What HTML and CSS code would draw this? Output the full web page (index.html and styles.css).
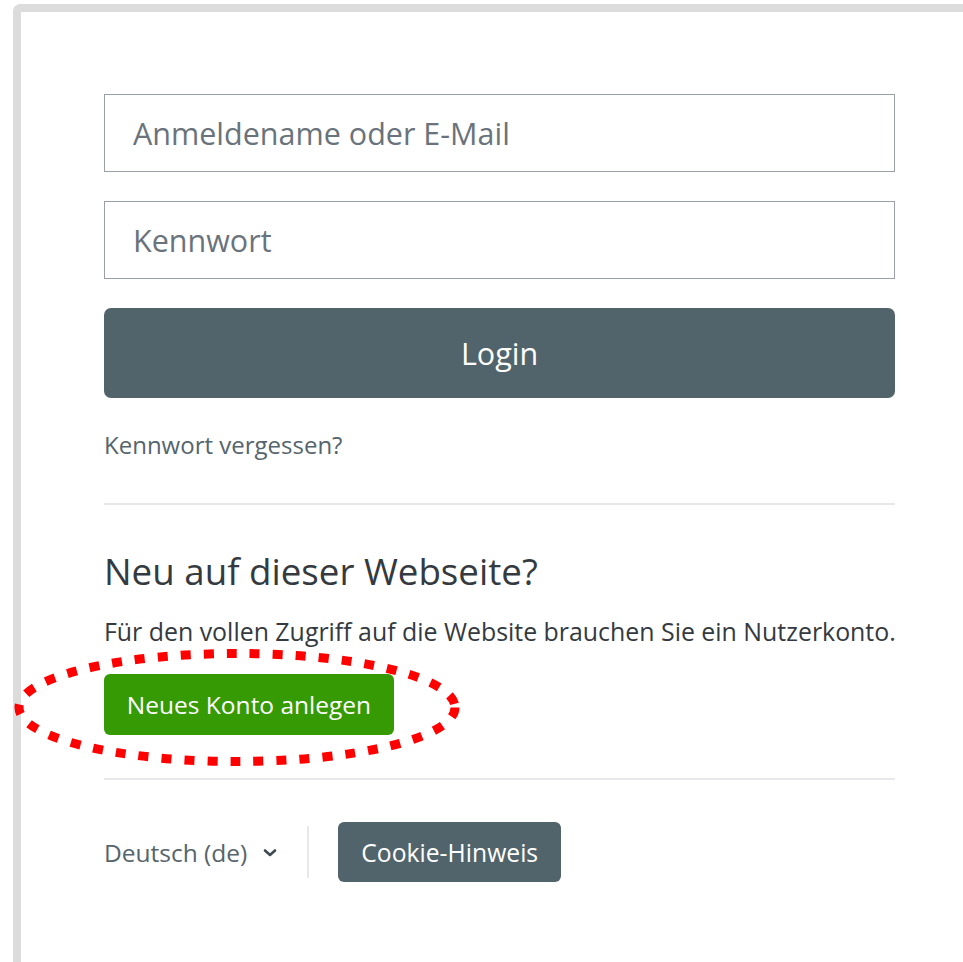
FILE: index.html
```html
<!DOCTYPE html>
<html lang="de">
<head>
<meta charset="utf-8">
<title>Login</title>
<link rel="stylesheet" href="styles.css">
</head>
<body>
<div class="frame">
  <div class="login">
    <form class="login-form">
      <input class="field" type="text" placeholder="Anmeldename oder E-Mail">
      <input class="field" type="password" placeholder="Kennwort">
      <button class="btn btn-login" type="button">Login</button>
    </form>
    <a class="forgot" href="#">Kennwort vergessen?</a>
    <hr class="rule rule-top">
    <h2 class="signup-title">Neu auf dieser Webseite?</h2>
    <p class="signup-text">Für den vollen Zugriff auf die Website brauchen Sie ein Nutzerkonto.</p>
    <div class="signup-action">
      <button class="btn btn-signup" type="button">Neues Konto anlegen</button>
      <svg class="highlight" width="446" height="119" viewBox="0 0 446 119">
        <ellipse cx="223" cy="59.5" rx="218" ry="54" fill="none" stroke="#ff0000" stroke-width="9" stroke-dasharray="10 13"/>
      </svg>
    </div>
    <hr class="rule rule-bottom">
    <div class="footer-row">
      <div class="lang">
        <span>Deutsch (de)</span>
        <svg class="chev" width="14" height="10" viewBox="0 0 14 10"><path d="M2 2.5 L7 7 L12 2.5" fill="none" stroke="#3d4a52" stroke-width="2.6" stroke-linecap="round" stroke-linejoin="round"/></svg>
      </div>
      <div class="divider"></div>
      <button class="btn btn-cookie" type="button">Cookie-Hinweis</button>
    </div>
  </div>
</div>
</body>
</html>
```

FILE: styles.css
```css
html, body {
  margin: 0;
  padding: 0;
  background: #ffffff;
}

body {
  font-family: "Open Sans", "Noto Sans", sans-serif;
  color: #343a40;
  height: 962px;
  overflow: hidden;
}

.frame {
  margin: 4px 0 0 13px;
  border-top: 8px solid #dcdcdc;
  border-left: 8px solid #dcdcdc;
  border-top-left-radius: 8px;
  height: 960px;
  box-sizing: border-box;
}

.login {
  width: 791px;
  padding: 82px 0 0 83px;
}

.login-form {
  display: flex;
  flex-direction: column;
  gap: 29px;
}

.field {
  height: 78px;
  box-sizing: border-box;
  border: 1px solid #9aa0a8;
  border-radius: 0;
  padding: 0 28px;
  font-family: inherit;
  font-size: 30.5px;
  color: #343a40;
  outline: none;
}

.field::placeholder {
  color: #6a737b;
}

.btn {
  border: none;
  font-family: inherit;
  color: #ffffff;
  cursor: pointer;
}

.btn-login {
  height: 90px;
  border-radius: 7px;
  background: #52646b;
  font-size: 30.5px;
}

.forgot {
  display: block;
  margin-top: 31px;
  font-size: 24px;
  line-height: 32px;
  color: #56646c;
  text-decoration: none;
}

.rule {
  border: none;
  border-top: 2px solid #e6e8ec;
  margin: 0;
}

.rule-top {
  margin-top: 42px;
}

.signup-title {
  margin: 44px 0 0;
  font-size: 36.7px;
  line-height: 44px;
  font-weight: 400;
  color: #343a40;
}

.signup-text {
  margin: 21px 0 0;
  font-size: 24.9px;
  line-height: 34px;
  white-space: nowrap;
}

.signup-action {
  position: relative;
  margin-top: 26px;
  display: flex;
}

.btn-signup {
  width: 290px;
  height: 61px;
  border-radius: 6px;
  background: #359a04;
  font-size: 24.5px;
}

.highlight {
  position: absolute;
  left: -90px;
  top: -26px;
}

.rule-bottom {
  margin-top: 43px;
}

.footer-row {
  display: flex;
  align-items: center;
  margin-top: 42px;
  height: 60px;
}

.lang {
  display: flex;
  align-items: center;
  gap: 16px;
  font-size: 24.5px;
  color: #56646c;
}

.chev {
  margin-top: 2px;
}

.divider {
  width: 2px;
  height: 52px;
  background: #e6e8ec;
  margin: 0 29px 0 30px;
}

.btn-cookie {
  height: 60px;
  padding: 0 23px;
  border-radius: 6px;
  background: #52646b;
  font-size: 24.7px;
}
```
